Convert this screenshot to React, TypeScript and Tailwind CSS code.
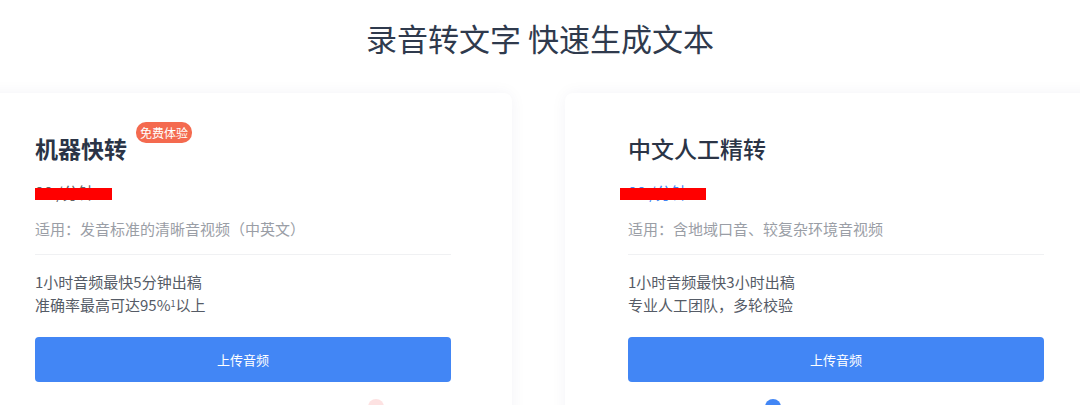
import React from "react";

const font = { fontFamily: '"Noto Sans CJK SC", "Noto Sans", sans-serif' };

function Card({
  title,
  titleWeight,
  badge,
  desc,
  lines,
  priceColor,
  barWidth,
  dotLeft,
  dotColor,
}: {
  title: string;
  titleWeight: string;
  badge?: string;
  desc: string;
  lines: React.ReactNode[];
  priceColor: string;
  barWidth: string;
  dotLeft: string;
  dotColor: string;
}) {
  return (
    <div className="w-[540px] shrink-0 rounded-[8px] bg-white pl-[63px] pr-[61px] pt-[39px] pb-[20px] shadow-[0_0_16px_rgba(30,40,90,0.05)]">
      <div className="flex items-start">
        <div className={`text-[23px] leading-[32px] text-[#2b3446] ${titleWeight}`}>{title}</div>
        {badge && (
          <div className="ml-[9px] -mt-[10px] rounded-[10px] bg-[#f46a4f] px-[4px] text-[12px] leading-[21px] text-white">
            {badge}
          </div>
        )}
      </div>
      <div className="relative mt-[16px] h-[24px]">
        <span className={`text-[16px] leading-[24px] ${priceColor}`}>00 /分钟</span>
        <div className={`absolute top-[8px] h-[12px] bg-[#ff0000] ${barWidth}`} />
      </div>
      <div className="mt-[13px] text-[15px] leading-[24px] text-[#9a9ea6]">{desc}</div>
      <div className="mt-[13px] h-px bg-[#f0f1f3]" />
      <div className="mt-[15px] text-[15px] leading-[23px] text-[#555b66]">
        {lines.map((l, i) => (
          <div key={i}>{l}</div>
        ))}
      </div>
      <button className="mt-[21px] flex h-[45px] w-full items-center justify-center rounded-[4px] bg-[#4286f5] text-[13px] text-white">
        上传音频
      </button>
      <div className="relative mt-[17px] h-[20px]">
        <div className={`absolute top-0 h-[16px] w-[16px] rounded-full ${dotLeft} ${dotColor}`} />
      </div>
    </div>
  );
}

export default function App() {
  return (
    <div className="h-[405px] w-[1080px] overflow-hidden bg-white" style={font}>
      <h1 className="pt-[18px] text-center text-[31px] leading-[40px] text-[#2f3a4d]">
        录音转文字 快速生成文本
      </h1>
      <div className="ml-[-28px] mt-[35px] flex gap-[53px]">
        <Card
          title="机器快转"
          titleWeight="font-bold"
          badge="免费体验"
          desc="适用：发音标准的清晰音视频（中英文）"
          priceColor="text-[#666]"
          barWidth="left-0 w-[77px]"
          dotLeft="left-[333px]"
          dotColor="bg-[#fde2e2]"
          lines={[
            "1小时音频最快5分钟出稿",
            <>
              准确率最高可达95%<sup className="text-[9px]">1</sup>以上
            </>,
          ]}
        />
        <Card
          title="中文人工精转"
          titleWeight="font-medium"
          desc="适用：含地域口音、较复杂环境音视频"
          priceColor="text-[#4286f5]"
          barWidth="-left-[8px] w-[86px]"
          dotLeft="left-[137px]"
          dotColor="bg-[#4286f5]"
          lines={["1小时音频最快3小时出稿", "专业人工团队，多轮校验"]}
        />
      </div>
    </div>
  );
}
